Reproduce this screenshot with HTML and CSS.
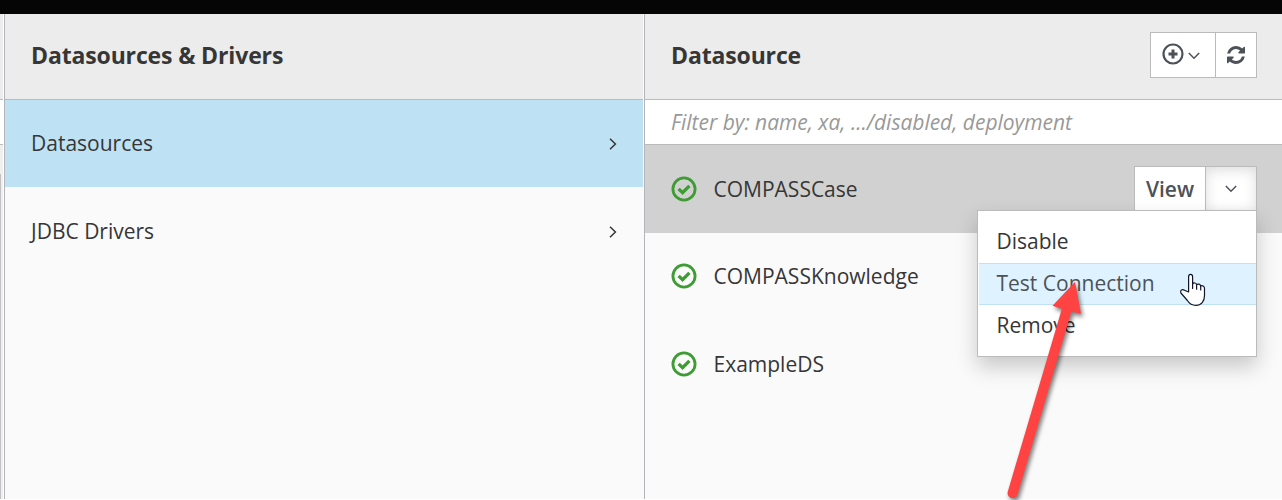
FILE: index.html
```html
<!DOCTYPE html>
<html lang="en">
<head>
<meta charset="utf-8">
<title>Datasources</title>
<link rel="stylesheet" href="styles.css">
</head>
<body>
<svg class="defs" width="0" height="0">
  <symbol id="ok" viewBox="0 0 26 26"><circle cx="13" cy="13" r="11.1" fill="none" stroke="#3f9c35" stroke-width="2.8"/><path d="M7.6 12.9l4 3.8 6.8-6.9" fill="none" stroke="#3f9c35" stroke-width="3.3"/></symbol>
  <symbol id="right" viewBox="0 0 8 12"><path d="M1 .8l5.400 5.200L1 11.200" fill="none" stroke="#363636" stroke-width="1.5"/></symbol>
  <symbol id="down" viewBox="0 0 12 8"><path d="M.8 1l5.200 5.200L11.200 1" fill="none" stroke="#4d5258" stroke-width="1.5"/></symbol>
</svg>
<div class="topbar"></div>
<main class="finder">
  <aside class="previous"><div class="prev-head"></div><div class="prev-filter"></div><div class="prev-body"></div></aside>
  <section class="column categories">
    <header class="head"><h1>Datasources &amp; Drivers</h1></header>
    <ul class="list">
      <li class="item selected"><span>Datasources</span><svg class="chev"><use href="#right"/></svg></li>
      <li class="item"><span>JDBC Drivers</span><svg class="chev"><use href="#right"/></svg></li>
    </ul>
  </section>
  <section class="column sources">
    <header class="head">
      <h1>Datasource</h1>
      <div class="tools">
        <button class="tool add">
          <svg width="22" height="22" viewBox="0 0 22 22"><circle cx="11" cy="11" r="9.5" fill="none" stroke="#4d5258" stroke-width="2.200"/><path d="M11 6.500v9M6.500 11h9" stroke="#4d5258" stroke-width="3"/></svg>
          <svg class="caret"><use href="#down"/></svg>
        </button>
        <button class="tool refresh"><svg width="18" height="18" viewBox="0 0 1536 1536"><path fill="#4d5258" d="M1511 928q0 5-1 7-64 268-268 434.500T764 1536q-146 0-282.500-55T238 1324l-129 129q-19 19-45 19t-45-19-19-45V960q0-26 19-45t45-19h448q26 0 45 19t19 45-19 45l-137 137q71 66 161 102t187 36q134 0 250-65t186-179q11-17 53-117 8-23 30-23h192q13 0 22.500 9.500t9.500 22.500zm25-800v448q0 26-19 45t-45 19h-448q-26 0-45-19t-19-45 19-45l138-138Q969 256 768 256q-134 0-250 65T332 500q-11 17-53 117-8 23-30 23H50q-13 0-22.500-9.500T18 608v-7q65-268 270-434.500T768 0q146 0 284 55.500T1297 212l130-129q19-19 45-19t45 19 19 45z"/></svg></button>
      </div>
    </header>
    <div class="filter">Filter by: name, xa, .../disabled, deployment</div>
    <ul class="list">
      <li class="item active"><svg class="ok"><use href="#ok"/></svg><span class="name">COMPASSCase</span>
        <div class="actions"><button class="view">View</button><button class="toggle"><svg class="caret"><use href="#down"/></svg></button>
          <ul class="menu"><li>Disable</li><li class="hover">Test Connection</li><li>Remove</li></ul>
        </div>
      </li>
      <li class="item short"><svg class="ok"><use href="#ok"/></svg><span class="name">COMPASSKnowledge</span></li>
      <li class="item"><svg class="ok"><use href="#ok"/></svg><span class="name">ExampleDS</span></li>
    </ul>
  </section>
</main>
<svg class="pointer" width="28" height="34" viewBox="0 0 28 34"><path d="M8.600 19V3.800c0-3.200 4-3.200 4 0V11c.8-1.600 3.800-1.300 4 .7 1.200-1.200 3.900-.6 4.100 1.400 1.600-1 3.800 0 3.800 2.200v7.500c0 5.400-3.200 9.600-8.600 9.600-4.100 0-6.500-1.700-8.500-4.900L.900 20c-1.200-3 1.600-4.100 3.600-2.700z" fill="#fff" stroke="#11142a" stroke-width="1.200" stroke-linejoin="round"/><path d="M12.600 10.500v5M16.600 11.700v4.500M20.700 13v4" stroke="#11142a" stroke-width="1.200" stroke-linecap="round"/></svg>
<svg class="arrow" width="100" height="230" viewBox="0 0 100 230"><path d="M75 11.700L81 44l-9.600-2.600L17.600 224.200c-2.200 6.700-11.800 4-9.800-2.800L61.800 39l-9.300-3.200z" fill="#ff4343"/></svg>
</body>
</html>
```
FILE: styles.css
```css
* { box-sizing: border-box; }
body { margin: 0; height: 500px; overflow: hidden; display: flex; flex-direction: column; background: #fff; color: #363636; font: 21px "Open Sans", sans-serif; }
ul { margin: 0; padding: 0; list-style: none; }
h1 { margin: 0; font-size: 23px; line-height: 32px; font-weight: 700; letter-spacing: -.14px; }
button { margin: 0; padding: 0; font: inherit; color: #4d5258; background: #fff; border: 1px solid #bbb; }
svg { display: block; flex: none; }
.defs { position: absolute; }
.topbar { height: 14px; flex: none; background: #050505; }
.finder { height: 485px; display: grid; grid-template-columns: 4px 640px 638px; }
.previous { border-right: 1px solid #fff; }
.prev-head { height: 86px; background: #ececec; border-bottom: 1px solid #bbb; }
.prev-filter { height: 45px; border-bottom: 1px solid #bbb; }
.prev-body { height: 354px; background: linear-gradient(#f0eff0, #f0eff0) 0 0 / 100% 29px no-repeat, linear-gradient(90deg, #c3c0c4 1px, #f0eff0 1px); }
.column { background: #fafafa; border-left: 1px solid #b3b5bb; }
.categories { border-right: 1px solid #fafafa; }
.head { height: 86px; display: flex; align-items: center; justify-content: space-between; padding: 0 25px 3px 26px; background: #ececec; border-bottom: 1px solid #bbb; }
.item { height: 88px; display: flex; align-items: center; padding: 0 26px; }
.item span { padding-bottom: 1px; }
.categories .item { justify-content: space-between; }
.categories .item span { padding-bottom: 0; }
.categories .selected { height: 87px; background: #bee1f4; }
.categories .selected span { padding-bottom: 2px; }
.selected .chev { margin-top: 1px; }
.chev { width: 8px; height: 12px; margin-top: 2px; }
.tools { display: flex; width: 107px; height: 46px; margin-top: -1px; }
.tool { display: flex; align-items: center; justify-content: center; }
.add { width: 66px; gap: 4px; padding: 0 4px 2px 0; }
.add .caret { margin-top: 4px; }
.refresh { width: 42px; margin-left: -1px; }
.caret { width: 12px; height: 8px; }
.filter { height: 45px; padding-left: 26px; line-height: 44px; font-size: 21px; letter-spacing: -.02px; font-style: italic; color: #999; background: #fff; border-bottom: 1px solid #bbb; }
.ok { width: 26px; height: 26px; margin-right: 16.5px; }
.short .ok { margin-bottom: 1px; }
.active { padding-right: 25px; background: #d1d1d1; }
.short { height: 87px; }
.actions { position: relative; display: flex; width: 123px; height: 46px; margin-left: auto; }
.view { width: 72px; font-weight: 600; padding-bottom: 1px; }
.toggle { width: 52px; margin-left: -1px; display: flex; align-items: center; justify-content: center; box-shadow: inset 0 3px 13px rgba(0,0,0,.14); }
.menu { position: absolute; z-index: 1; top: 44px; right: 0; width: 280px; height: 147px; padding: 10px 0; background: #fff; border: 1px solid #bbb; box-shadow: 0 10px 20px rgba(0,0,0,.2); }
.menu li { height: 42px; line-height: 38px; padding-left: 18.5px; border: 1px solid transparent; border-width: 1px 0; }
.menu .hover { margin-left: 1px; padding-left: 17.5px; color: #4d5258; background: #def3ff; border-color: #bee1f4; }
.pointer { position: absolute; z-index: 2; left: 1180px; top: 273px; overflow: visible; }
.arrow { position: absolute; z-index: 3; left: 1000px; top: 270px; filter: drop-shadow(2px 3px 2px rgba(0,0,0,.5)); }
```
